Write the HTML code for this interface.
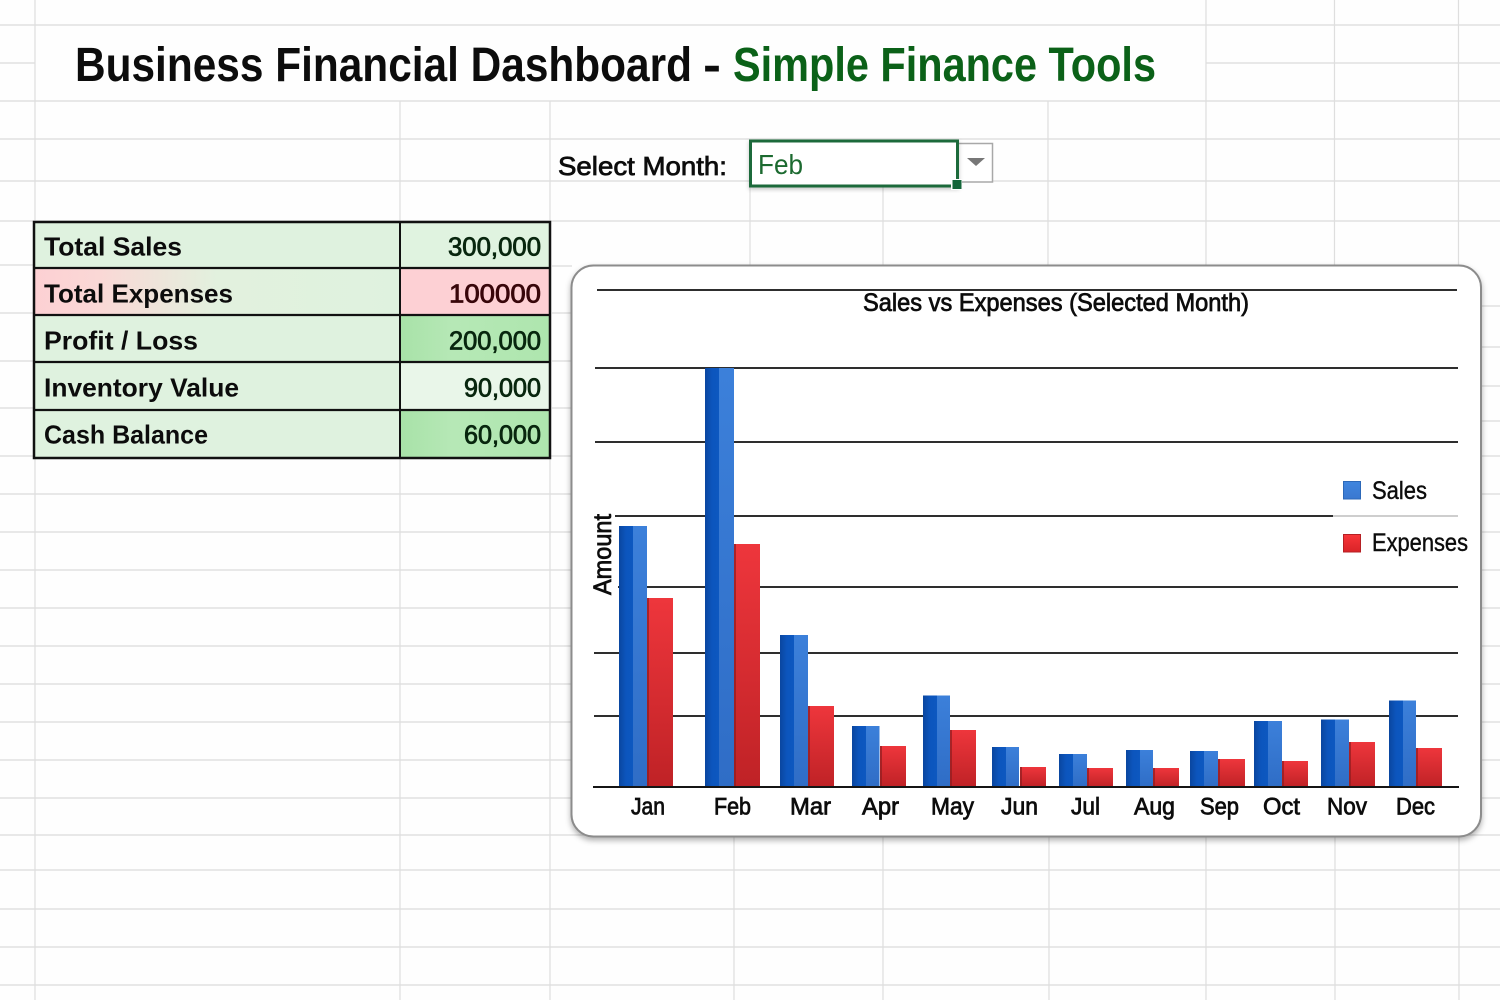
<!DOCTYPE html>
<html lang="en">
<head>
<meta charset="utf-8">
<title>Business Financial Dashboard - Simple Finance Tools</title>
<style>
html,body{margin:0;padding:0;width:1500px;height:1000px;overflow:hidden;background:#fefefe}
svg{display:block}
text{font-family:"Liberation Sans",Arial,sans-serif;fill:#0c0c0c}
.b{font-weight:700}
.m{stroke:#0c0c0c;stroke-width:.75}
.g line{stroke:#e0e0e0;stroke-width:1.4}
.v line{stroke:#dedede;stroke-width:1.2}
.c line{stroke:#111;stroke-width:1.8}
.lbl{font-size:26px;font-weight:700}
.val{font-size:26px;stroke-width:.8}
.mon{font-size:24px;stroke:#0c0c0c;stroke-width:.75}
</style>
</head>
<body>
<svg width="1500" height="1000" viewBox="0 0 1500 1000" xmlns="http://www.w3.org/2000/svg">
<defs>
<linearGradient id="bl" x1="0" x2="1" y1="0" y2="0"><stop offset="0" stop-color="#0a469f"/><stop offset=".5" stop-color="#0c55bd"/><stop offset="1" stop-color="#0d58c0"/></linearGradient>
<linearGradient id="br" x1="0" x2="0" y1="0" y2="1"><stop offset="0" stop-color="#3c80da"/><stop offset="1" stop-color="#2f6dc6"/></linearGradient>
<linearGradient id="rd" x1="0" x2="0" y1="0" y2="1"><stop offset="0" stop-color="#ee363c"/><stop offset="1" stop-color="#bf2226"/></linearGradient>
<linearGradient id="pink" x1="0" x2="1" y1="0" y2="0"><stop offset="0" stop-color="#fdd0d3"/><stop offset=".18" stop-color="#fad8d6"/><stop offset=".5" stop-color="#e2f1de"/><stop offset="1" stop-color="#dff2df"/></linearGradient>
<linearGradient id="gr" x1="0" x2="1" y1="0" y2="0"><stop offset="0" stop-color="#a8e2a8"/><stop offset=".35" stop-color="#b6e8b6"/><stop offset="1" stop-color="#aee6ae"/></linearGradient>
<linearGradient id="lg1" x1="0" x2="0" y1="0" y2="1"><stop offset="0" stop-color="#3f85de"/><stop offset="1" stop-color="#3a78d0"/></linearGradient>
<linearGradient id="lg2" x1="0" x2="0" y1="0" y2="1"><stop offset="0" stop-color="#f8363a"/><stop offset="1" stop-color="#d92327"/></linearGradient>
<filter id="sh" x="-3%" y="-3%" width="106%" height="106%"><feDropShadow dx="0" dy="3" stdDeviation="3" flood-color="#000" flood-opacity=".3"/></filter>
<filter id="sh2" x="-5%" y="-10%" width="110%" height="125%"><feDropShadow dx="0" dy="2" stdDeviation="2" flood-color="#000" flood-opacity=".22"/></filter>
</defs>

<rect width="1500" height="1000" fill="#fefefe"/>

<!-- sheet grid: horizontal -->
<g class="g">
<line x1="0" x2="1500" y1="25" y2="25"/>
<line x1="0" x2="35" y1="63" y2="63"/>
<line x1="1206" x2="1500" y1="63" y2="63"/>
<line x1="0" x2="1500" y1="101" y2="101"/>
<line x1="0" x2="1500" y1="139" y2="139"/>
<line x1="0" x2="1500" y1="181" y2="181"/>
<line x1="0" x2="1500" y1="221" y2="221"/>
<line x1="0" x2="35" y1="265" y2="265"/>
<line x1="0" x2="35" y1="313" y2="313"/>
<line x1="0" x2="35" y1="361" y2="361"/>
<line x1="0" x2="35" y1="408" y2="408"/>
<line x1="552" x2="572" y1="266" y2="266"/>
<line x1="552" x2="572" y1="313" y2="313"/>
<line x1="552" x2="572" y1="361" y2="361"/>
<line x1="552" x2="572" y1="408" y2="408"/>
<line x1="1480" x2="1500" y1="306" y2="306"/>
<line x1="1480" x2="1500" y1="347" y2="347"/>
<line x1="1480" x2="1500" y1="386" y2="386"/>
<line x1="1480" x2="1500" y1="421" y2="421"/>
<line x1="0" x2="1500" y1="456" y2="456"/>
<line x1="0" x2="1500" y1="494" y2="494"/>
<line x1="0" x2="1500" y1="532" y2="532"/>
<line x1="0" x2="1500" y1="570" y2="570"/>
<line x1="0" x2="1500" y1="608" y2="608"/>
<line x1="0" x2="1500" y1="646" y2="646"/>
<line x1="0" x2="1500" y1="684" y2="684"/>
<line x1="0" x2="1500" y1="722" y2="722"/>
<line x1="0" x2="1500" y1="760" y2="760"/>
<line x1="0" x2="1500" y1="798" y2="798"/>
<line x1="0" x2="1500" y1="835" y2="835"/>
<line x1="0" x2="1500" y1="870" y2="870"/>
<line x1="0" x2="1500" y1="909" y2="909"/>
<line x1="0" x2="1500" y1="947" y2="947"/>
<line x1="0" x2="1500" y1="985" y2="985"/>
</g>
<!-- sheet grid: vertical -->
<g class="v">
<line x1="35" x2="35" y1="0" y2="1000"/>
<line x1="400" x2="400" y1="101" y2="1000"/>
<line x1="550" x2="550" y1="101" y2="1000"/>
<line x1="750" x2="750" y1="187" y2="265"/>
<line x1="883" x2="883" y1="187" y2="265"/>
<line x1="1048" x2="1048" y1="101" y2="265"/>
<line x1="1206" x2="1206" y1="0" y2="265"/>
<line x1="1334.5" x2="1334.5" y1="0" y2="265"/>
<line x1="1458.5" x2="1458.5" y1="0" y2="265"/>
<line x1="734" x2="734" y1="836" y2="1000"/>
<line x1="883" x2="883" y1="836" y2="1000"/>
<line x1="1049" x2="1049" y1="836" y2="1000"/>
<line x1="1206" x2="1206" y1="836" y2="1000"/>
<line x1="1335" x2="1335" y1="836" y2="1000"/>
<line x1="1459" x2="1459" y1="836" y2="1000"/>
</g>

<!-- title -->
<rect x="36" y="26" width="1169" height="74" fill="#fefefe"/>
<text class="b" x="75" y="81" font-size="48" textLength="617" lengthAdjust="spacingAndGlyphs">Business Financial Dashboard</text>
<text class="b" x="703" y="81" font-size="48" textLength="18" lengthAdjust="spacingAndGlyphs">-</text>
<text class="b" x="733" y="81" font-size="48" textLength="423" lengthAdjust="spacingAndGlyphs" style="fill:#0b6118">Simple Finance Tools</text>

<!-- selector -->
<text class="m" x="558" y="175" font-size="26" textLength="169" lengthAdjust="spacingAndGlyphs">Select Month:</text>
<rect x="957" y="143.500" width="35.500" height="38.500" fill="#fff" stroke="#a8a8a8" stroke-width="1.500"/>
<path d="M967 158H985L976 166Z" fill="#777"/>
<rect x="750.500" y="141" width="207" height="45" fill="#fff" stroke="#1b6b3a" stroke-width="3" filter="url(#sh2)"/>
<rect x="951" y="179" width="11" height="11" fill="#fff"/>
<rect x="952.500" y="180" width="9" height="9" fill="#14663a"/>
<text x="758" y="174" font-size="28" textLength="45" lengthAdjust="spacingAndGlyphs" style="fill:#1c6a30">Feb</text>

<!-- KPI table -->
<rect x="34" y="222" width="366" height="236" fill="#dff2df"/>
<rect x="34" y="268" width="366" height="47" fill="url(#pink)"/>
<rect x="400" y="222" width="150" height="46" fill="#e0f3e0"/>
<rect x="400" y="268" width="150" height="47" fill="#fdd0d4"/>
<rect x="400" y="315" width="150" height="47" fill="url(#gr)"/>
<rect x="400" y="362" width="150" height="48" fill="#e9f6e9"/>
<rect x="400" y="410" width="150" height="48" fill="url(#gr)"/>
<g stroke="#111" fill="none">
<rect x="34" y="222" width="516" height="236" stroke-width="2.500"/>
<line x1="400" x2="400" y1="222" y2="458" stroke-width="2"/>
<line x1="34" x2="550" y1="268" y2="268" stroke-width="2.200"/>
<line x1="34" x2="550" y1="315" y2="315" stroke-width="2.200"/>
<line x1="34" x2="550" y1="362" y2="362" stroke-width="2.200"/>
<line x1="34" x2="550" y1="410" y2="410" stroke-width="2.200"/>
</g>
<text class="lbl" x="44" y="255.500" textLength="138" lengthAdjust="spacingAndGlyphs">Total Sales</text>
<text class="lbl" x="44" y="302.500" textLength="189" lengthAdjust="spacingAndGlyphs">Total Expenses</text>
<text class="lbl" x="44" y="349.500" textLength="154" lengthAdjust="spacingAndGlyphs">Profit / Loss</text>
<text class="lbl" x="44" y="396.500" textLength="195" lengthAdjust="spacingAndGlyphs">Inventory Value</text>
<text class="lbl" x="44" y="443.500" textLength="164" lengthAdjust="spacingAndGlyphs">Cash Balance</text>
<text class="val" x="448" y="255.500" textLength="93" lengthAdjust="spacingAndGlyphs" style="fill:#08260e;stroke:#08260e">300,000</text>
<text class="val" x="449" y="302.500" textLength="92" lengthAdjust="spacingAndGlyphs" style="fill:#38060a;stroke:#38060a">100000</text>
<text class="val" x="449" y="349.500" textLength="92" lengthAdjust="spacingAndGlyphs" style="fill:#08260e;stroke:#08260e">200,000</text>
<text class="val" x="464" y="396.500" textLength="77" lengthAdjust="spacingAndGlyphs" style="fill:#08260e;stroke:#08260e">90,000</text>
<text class="val" x="464" y="443.500" textLength="77" lengthAdjust="spacingAndGlyphs" style="fill:#08260e;stroke:#08260e">60,000</text>

<!-- chart card -->
<rect x="571.500" y="265.500" width="909.500" height="571" rx="22" ry="22" fill="#fff" stroke="#8c8c8c" stroke-width="2" filter="url(#sh)"/>
<g class="c">
<line x1="597" x2="1457" y1="290" y2="290"/>
<line x1="595" x2="1458" y1="368" y2="368"/>
<line x1="595" x2="1458" y1="442" y2="442"/>
<line x1="615" x2="1333" y1="516" y2="516"/>
<line x1="618" x2="1458" y1="587" y2="587"/>
<line x1="594" x2="1458" y1="653" y2="653"/>
<line x1="594" x2="1458" y1="716" y2="716"/>
</g>
<line x1="1333" x2="1458" y1="516" y2="516" stroke="#bdbdbd" stroke-width="1.600"/>

<text class="m" x="863" y="311" font-size="25" textLength="386" lengthAdjust="spacingAndGlyphs">Sales vs Expenses (Selected Month)</text>
<text class="m" transform="translate(611 595) rotate(-90)" x="0" y="0" font-size="25" textLength="81" lengthAdjust="spacingAndGlyphs">Amount</text>

<!-- bars -->
<g>
<rect x="619" y="526" width="14" height="261" fill="url(#bl)"/><rect x="633" y="526" width="14" height="261" fill="url(#br)"/>
<rect x="647" y="598" width="26" height="189" fill="url(#rd)"/><rect x="647" y="598" width="2" height="189" fill="#8f1c20" opacity=".7"/>
<rect x="705" y="368" width="14" height="419" fill="url(#bl)"/><rect x="719" y="368" width="15" height="419" fill="url(#br)"/>
<rect x="734" y="544" width="26" height="243" fill="url(#rd)"/><rect x="734" y="544" width="2" height="243" fill="#8f1c20" opacity=".7"/>
<rect x="780" y="635" width="14" height="152" fill="url(#bl)"/><rect x="794" y="635" width="14" height="152" fill="url(#br)"/>
<rect x="808" y="706" width="26" height="81" fill="url(#rd)"/><rect x="808" y="706" width="2" height="81" fill="#8f1c20" opacity=".7"/>
<rect x="852" y="726" width="14" height="61" fill="url(#bl)"/><rect x="866" y="726" width="13.500" height="61" fill="url(#br)"/>
<rect x="880" y="746" width="26" height="41" fill="url(#rd)"/><rect x="880" y="746" width="2" height="41" fill="#8f1c20" opacity=".7"/>
<rect x="923" y="695.500" width="14" height="91.500" fill="url(#bl)"/><rect x="937" y="695.500" width="13" height="91.500" fill="url(#br)"/>
<rect x="950" y="730" width="26" height="57" fill="url(#rd)"/><rect x="950" y="730" width="2" height="57" fill="#8f1c20" opacity=".7"/>
<rect x="992" y="747" width="14" height="40" fill="url(#bl)"/><rect x="1006" y="747" width="13" height="40" fill="url(#br)"/>
<rect x="1020" y="767" width="26" height="20" fill="url(#rd)"/><rect x="1020" y="767" width="2" height="20" fill="#8f1c20" opacity=".7"/>
<rect x="1059" y="754" width="14" height="33" fill="url(#bl)"/><rect x="1073" y="754" width="14" height="33" fill="url(#br)"/>
<rect x="1087" y="768" width="26" height="19" fill="url(#rd)"/><rect x="1087" y="768" width="2" height="19" fill="#8f1c20" opacity=".7"/>
<rect x="1126" y="750" width="14" height="37" fill="url(#bl)"/><rect x="1140" y="750" width="13" height="37" fill="url(#br)"/>
<rect x="1153" y="768" width="26" height="19" fill="url(#rd)"/><rect x="1153" y="768" width="2" height="19" fill="#8f1c20" opacity=".7"/>
<rect x="1190" y="751" width="14" height="36" fill="url(#bl)"/><rect x="1204" y="751" width="14" height="36" fill="url(#br)"/>
<rect x="1218" y="759" width="27" height="28" fill="url(#rd)"/><rect x="1218" y="759" width="2" height="28" fill="#8f1c20" opacity=".7"/>
<rect x="1254" y="721" width="14" height="66" fill="url(#bl)"/><rect x="1268" y="721" width="14" height="66" fill="url(#br)"/>
<rect x="1282" y="761" width="26" height="26" fill="url(#rd)"/><rect x="1282" y="761" width="2" height="26" fill="#8f1c20" opacity=".7"/>
<rect x="1321" y="719.500" width="14" height="67.500" fill="url(#bl)"/><rect x="1335" y="719.500" width="14" height="67.500" fill="url(#br)"/>
<rect x="1349" y="742" width="26" height="45" fill="url(#rd)"/><rect x="1349" y="742" width="2" height="45" fill="#8f1c20" opacity=".7"/>
<rect x="1389" y="700.500" width="14" height="86.500" fill="url(#bl)"/><rect x="1403" y="700.500" width="13" height="86.500" fill="url(#br)"/>
<rect x="1416" y="748" width="26" height="39" fill="url(#rd)"/><rect x="1416" y="748" width="2" height="39" fill="#8f1c20" opacity=".7"/>
</g>
<line x1="593" x2="1459" y1="787" y2="787" stroke="#151515" stroke-width="2"/>

<!-- month labels -->
<text class="mon" x="631" y="814.500" textLength="34" lengthAdjust="spacingAndGlyphs">Jan</text>
<text class="mon" x="714" y="814.500" textLength="37" lengthAdjust="spacingAndGlyphs">Feb</text>
<text class="mon" x="790" y="814.500" textLength="41" lengthAdjust="spacingAndGlyphs">Mar</text>
<text class="mon" x="862" y="814.500" textLength="37" lengthAdjust="spacingAndGlyphs">Apr</text>
<text class="mon" x="931" y="814.500" textLength="43" lengthAdjust="spacingAndGlyphs">May</text>
<text class="mon" x="1001" y="814.500" textLength="37" lengthAdjust="spacingAndGlyphs">Jun</text>
<text class="mon" x="1071" y="814.500" textLength="29" lengthAdjust="spacingAndGlyphs">Jul</text>
<text class="mon" x="1134" y="814.500" textLength="41" lengthAdjust="spacingAndGlyphs">Aug</text>
<text class="mon" x="1200" y="814.500" textLength="39" lengthAdjust="spacingAndGlyphs">Sep</text>
<text class="mon" x="1263" y="814.500" textLength="37" lengthAdjust="spacingAndGlyphs">Oct</text>
<text class="mon" x="1327" y="814.500" textLength="40" lengthAdjust="spacingAndGlyphs">Nov</text>
<text class="mon" x="1396" y="814.500" textLength="39" lengthAdjust="spacingAndGlyphs">Dec</text>

<!-- legend -->
<rect x="1343.500" y="481.500" width="17" height="17.500" fill="url(#lg1)" stroke="#2c68b8" stroke-width="1"/>
<text x="1372" y="499" font-size="25" textLength="55" lengthAdjust="spacingAndGlyphs" style="stroke:#0c0c0c;stroke-width:.4">Sales</text>
<rect x="1343.500" y="534.500" width="17" height="17.500" fill="url(#lg2)" stroke="#b52024" stroke-width="1"/>
<text x="1372" y="551" font-size="25" textLength="96" lengthAdjust="spacingAndGlyphs" style="stroke:#0c0c0c;stroke-width:.4">Expenses</text>
</svg>
</body>
</html>
